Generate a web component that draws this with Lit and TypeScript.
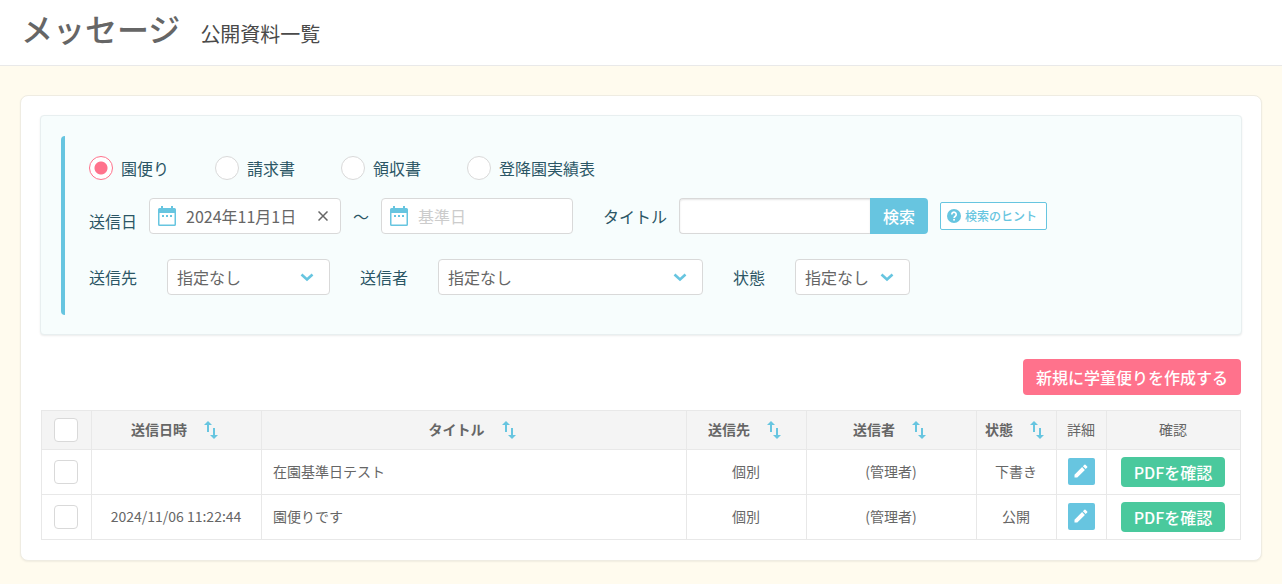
import { LitElement, html, css, nothing } from "lit";
import { customElement, state } from "lit/decorators.js";

interface DocumentRow {
  sentAt: string;
  title: string;
  target: string;
  sender: string;
  status: string;
}

const calendarIcon = html`<svg class="calendar" viewBox="0 0 18 20" aria-hidden="true">
  <path fill="currentColor" fill-rule="evenodd" d="M3 0h2v2h8V0h2v2h1.500a1.500 1.500 0 0 1 1.500 1.500V18.500a1.500 1.500 0 0 1-1.500 1.500H1.500A1.500 1.500 0 0 1 0 18.500V3.500A1.500 1.500 0 0 1 1.500 2H3zM1.500 7v11.500h15V7zM4 9h2v2H4zM8 9h2v2H8zM12 9h2v2h-2z"/>
</svg>`;

const sortIcon = html`<svg viewBox="0 0 24 24" width="24" height="24" aria-hidden="true">
  <path fill="currentColor" d="M11 4l4 4h-3v7h-2V8H7zM17 22l-4-4h3v-7h2v7h3z"/>
</svg>`;

const chevron = html`<svg class="chevron" viewBox="0 0 14 14" aria-hidden="true">
  <path d="M1.500 4.500L7 9.500L12.500 4.500" fill="none" stroke="currentColor" stroke-width="2.600"/>
</svg>`;

@customElement("app-root")
export class AppRoot extends LitElement {
  @state() private kind = "園便り";
  @state() private from = "2024年11月1日";

  private kinds = ["園便り", "請求書", "領収書", "登降園実績表"];

  private rows: DocumentRow[] = [
    { sentAt: "", title: "在園基準日テスト", target: "個別", sender: "(管理者)", status: "下書き" },
    { sentAt: "2024/11/06 11:22:44", title: "園便りです", target: "個別", sender: "(管理者)", status: "公開" },
  ];

  static styles = css`
    :host {
      display: block;
      min-height: 100vh;
      background: #fffbee;
      color: #666;
      font-family: "Noto Sans CJK JP", sans-serif;
      font-size: 16px;
      line-height: 24px;
    }
    * { box-sizing: border-box; }
    button, input, select { font: inherit; color: inherit; margin: 0; }
    button { cursor: pointer; border: 0; padding: 0; }
    svg { display: block; flex: none; }

    .header {
      display: flex;
      align-items: baseline;
      gap: 20px;
      padding: 4px 21px 13px;
      background: #fff;
      border-bottom: 1px solid #e9e9e9;
    }
    .header h1 { margin: 0; font-size: 32px; line-height: 48px; font-weight: 500; }
    .header h2 { margin: 0; font-size: 20px; line-height: 28px; font-weight: 400; color: #4a4a4a; }

    .card {
      margin: 29px 20px 0;
      padding: 19px 19px 20px;
      background: #fff;
      border: 1px solid #efece2;
      border-radius: 8px;
      box-shadow: 0 1px 2px rgba(0, 0, 0, 0.06);
    }
    .filter {
      padding: 20px 20px 19px;
      background: #f7fdfd;
      border: 1px solid #e8eff0;
      border-radius: 4px;
      box-shadow: 0 1px 2px rgba(0, 0, 0, 0.08);
      color: #2b5665;
    }
    .conditions {
      padding: 20px 0 20px 24px;
      border-left: 4px solid #67c5e0;
      border-radius: 4px 0 0 4px;
    }
    .row { display: flex; align-items: center; }
    .kinds { gap: 46px; }
    .dates { margin-top: 18px; gap: 12px; }
    .choices { margin-top: 25px; gap: 30px; }

    .kind { display: flex; align-items: center; gap: 8px; cursor: pointer; }
    .kind input {
      appearance: none;
      width: 24px;
      height: 24px;
      background: #fff;
      border: 1px solid #d9d9d9;
      border-radius: 50%;
    }
    .kind input:checked {
      border-color: #ff728c;
      background: radial-gradient(circle, #ff728c 6px, #fff 7px);
    }

    .lowered { padding-top: 10px; }
    .field {
      display: flex;
      align-items: center;
      flex: 0 1 192px;
      min-width: 0;
      height: 36px;
      padding: 0 8px;
      background: #fff;
      border: 1px solid #d9d9d9;
      border-radius: 4px;
      color: #666;
    }
    .field input {
      flex: 1;
      min-width: 0;
      margin-left: 10px;
      padding: 0;
      border: 0;
      outline: 0;
      background: none;
    }
    .field input::placeholder { color: #ccc; opacity: 1; }
    .calendar { width: 18px; height: 20px; color: #67c5e0; }
    .clear { width: 18px; height: 18px; background: none; color: #666; }
    .clear svg { margin: auto; }

    .title-label { margin-left: 18px; }
    .search { display: flex; }
    .search input {
      width: 191px;
      height: 36px;
      padding: 0 10px;
      background: #fff;
      border: 1px solid #d9d9d9;
      border-right: 0;
      border-radius: 4px 0 0 4px;
      box-shadow: inset 0 1px 2px rgba(0, 0, 0, 0.1);
      color: #666;
      outline: 0;
    }
    .search button {
      width: 58px;
      background: #67c5e0;
      border-radius: 0 4px 4px 0;
      color: #fff;
      font-weight: 500;
    }
    .hint {
      display: flex;
      align-items: center;
      gap: 4px;
      height: 28px;
      padding: 0 9px 0 6px;
      background: #fff;
      border: 1px solid #67c5e0;
      border-radius: 2px;
      color: #67c5e0;
      font-size: 12px;
      font-weight: 500;
    }

    .select { display: grid; align-items: center; color: #666; }
    .select > * { grid-area: 1 / 1; }
    .select select {
      appearance: none;
      width: 100%;
      height: 36px;
      padding: 0 9px;
      background: #fff;
      border: 1px solid #d9d9d9;
      border-radius: 4px;
      outline: 0;
    }
    .select.target { width: 163px; }
    .select.sender { width: 265px; }
    .select.status { width: 115px; }
    .chevron {
      width: 14px;
      height: 14px;
      margin-right: 16px;
      justify-self: end;
      color: #67c5e0;
      pointer-events: none;
    }

    .actions { display: flex; justify-content: flex-end; padding: 24px 1px 15px; }
    .create {
      height: 36px;
      padding: 0 13px;
      background: #ff728c;
      border-radius: 4px;
      color: #fff;
      font-weight: 500;
    }

    .list {
      width: calc(100% - 2px);
      margin-left: 1px;
      border-collapse: collapse;
      table-layout: fixed;
      font-size: 14px;
      line-height: 20px;
      text-align: center;
    }
    .list th, .list td { height: 45px; padding: 0 1px 2px 0; border: 1px solid #e8e8e8; }
    .list th { height: 39px; background: #f4f4f4; font-weight: 700; }
    .list th.plain { font-weight: 400; }
    .list td.title { padding-left: 11px; text-align: left; }
    .list .control { padding: 0 1px 0 0; }
    .w-check { width: 50px; }
    .w-date { width: 170px; }
    .w-target { width: 120px; }
    .w-sender { width: 170px; }
    .w-status { width: 80px; }
    .w-detail { width: 50px; }
    .w-pdf { width: 134px; }
    .sort {
      display: inline-flex;
      align-items: center;
      gap: 10px;
      background: none;
      font-weight: 700;
      vertical-align: middle;
    }
    .sort svg { color: #67c5e0; }
    .check {
      appearance: none;
      display: block;
      width: 24px;
      height: 24px;
      margin: 0 auto;
      background: #fff;
      border: 1px solid #d9d9d9;
      border-radius: 4px;
    }
    .check:checked { background: #67c5e0; }
    .edit {
      display: block;
      width: 27px;
      height: 27px;
      margin: 0 auto;
      background: #67c5e0;
      border-radius: 2px;
      color: #fff;
    }
    .edit svg { margin: auto; }
    .pdf {
      display: block;
      width: 104px;
      height: 30px;
      margin: 0 auto;
      background: #4ac99d;
      border-radius: 4px;
      color: #fff;
      font-size: 16px;
      font-weight: 500;
    }
  `;

  private sortHead(label: string) {
    return html`<th scope="col"><button class="sort" type="button">${label}${sortIcon}</button></th>`;
  }

  private choice(id: string, label: string) {
    return html`
      <label for=${id}>${label}</label>
      <div class="select ${id}">
        <select id=${id}><option>指定なし</option></select>
        ${chevron}
      </div>`;
  }

  render() {
    return html`
      <header class="header">
        <h1>メッセージ</h1>
        <h2>公開資料一覧</h2>
      </header>
      <main class="card">
        <form class="filter" @submit=${(e: Event) => e.preventDefault()}>
          <div class="conditions">
            <div class="row kinds">
              ${this.kinds.map((k) => html`
                <label class="kind">
                  <input type="radio" name="kind" .checked=${this.kind === k} @change=${() => (this.kind = k)} />${k}
                </label>`)}
            </div>
            <div class="row dates">
              <label class="lowered" for="from">送信日</label>
              <div class="field">
                ${calendarIcon}
                <input id="from" type="text" .value=${this.from} />
                ${this.from ? html`
                  <button class="clear" type="button" aria-label="クリア" @click=${() => (this.from = "")}>
                    <svg viewBox="0 0 10 10" width="10" height="10" aria-hidden="true">
                      <path d="M0.500 0.500L9.500 9.500M9.500 0.500L0.500 9.500" stroke="currentColor" stroke-width="1.500"/>
                    </svg>
                  </button>` : nothing}
              </div>
              <span>〜</span>
              <div class="field">
                ${calendarIcon}
                <input type="text" placeholder="基準日" aria-label="基準日" />
              </div>
              <label class="title-label" for="title">タイトル</label>
              <div class="search">
                <input id="title" type="text" /><button type="submit">検索</button>
              </div>
              <button class="hint" type="button">
                <svg viewBox="0 0 14 14" width="14" height="14" aria-hidden="true">
                  <circle cx="7" cy="7" r="7" fill="currentColor"/>
                  <path d="M4.800 5.400a2.200 2.200 0 1 1 3.500 1.800c-.8.600-1.200.9-1.200 1.800" fill="none" stroke="#fff" stroke-width="1.700"/>
                  <rect x="6.200" y="9.900" width="1.700" height="1.700" fill="#fff"/>
                </svg>
                検索のヒント
              </button>
            </div>
            <div class="row choices">
              ${this.choice("target", "送信先")}
              ${this.choice("sender", "送信者")}
              ${this.choice("status", "状態")}
            </div>
          </div>
        </form>
        <div class="actions">
          <button class="create" type="button">新規に学童便りを作成する</button>
        </div>
        <table class="list">
          <colgroup>
            <col class="w-check" /><col class="w-date" /><col /><col class="w-target" />
            <col class="w-sender" /><col class="w-status" /><col class="w-detail" /><col class="w-pdf" />
          </colgroup>
          <thead>
            <tr>
              <th class="control" scope="col"><input class="check" type="checkbox" aria-label="すべて選択" /></th>
              ${["送信日時", "タイトル", "送信先", "送信者", "状態"].map((l) => this.sortHead(l))}
              <th class="plain" scope="col">詳細</th>
              <th class="plain" scope="col">確認</th>
            </tr>
          </thead>
          <tbody>
            ${this.rows.map((r) => html`
              <tr>
                <td class="control"><input class="check" type="checkbox" aria-label=${r.title} /></td>
                <td>${r.sentAt}</td>
                <td class="title">${r.title}</td>
                <td>${r.target}</td>
                <td>${r.sender}</td>
                <td>${r.status}</td>
                <td>
                  <button class="edit" type="button" aria-label="詳細">
                    <svg viewBox="0 0 14 14" width="14" height="14" aria-hidden="true">
                      <path fill="currentColor" d="M.500 10.700V13.500h2.800L10.900 5.900 8.100 3.100zM13.200 3.600a.8.8 0 0 0 0-1.100L11.500.800a.8.8 0 0 0-1.100 0L8.900 2.300l2.800 2.800z"/>
                    </svg>
                  </button>
                </td>
                <td class="control"><button class="pdf" type="button">PDFを確認</button></td>
              </tr>`)}
          </tbody>
        </table>
      </main>
    `;
  }
}
